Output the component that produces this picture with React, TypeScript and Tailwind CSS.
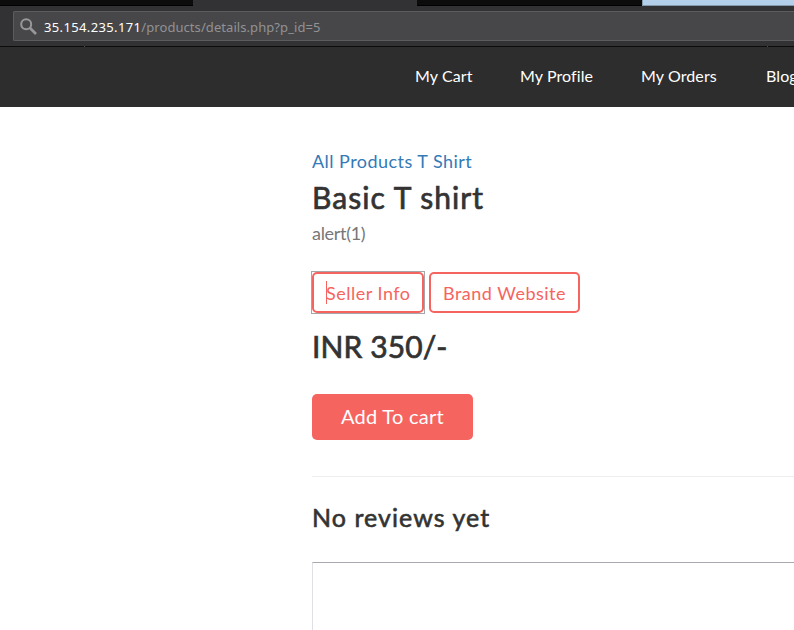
const navItems = [
  { label: 'My Cart', width: 'w-[57px]' },
  { label: 'My Profile', width: 'w-[73px]' },
  { label: 'My Orders', width: 'w-[77px]' },
  { label: 'Blog', width: 'w-[40px]' },
];

function BrowserChrome() {
  return (
    <div className="h-[47px] bg-[#323234]">
      <div className="flex h-[6px]">
        <div className="w-[193px] border-b border-black bg-[#0c0c0c]" />
        <div className="w-[224px]" />
        <div className="w-[225px] border-b border-black bg-[#0c0c0c]" />
        <div className="flex-1 border-b border-l border-[#8499ae] bg-[#b4cfea]" />
      </div>
      <div className="h-[40px] pt-[5px] pl-[13px]">
        <div className="flex h-[30px] items-center rounded-l-[2px] border border-r-0 border-[#5c5c5e] bg-[#474749] pl-[6px]">
          <svg className="h-[17px] w-[17px] shrink-0" viewBox="0 0 17 17" fill="none" stroke="#98989a">
            <circle cx="6.2" cy="6.2" r="5" strokeWidth="2" />
            <path d="M10 10l6 6" strokeWidth="2.6" />
          </svg>
          <div className="ml-[7px] pt-[2px] font-['Noto_Sans',sans-serif] text-[13px] leading-[18px] whitespace-nowrap text-[#929295]">
            <span className="tracking-[0.36px] text-white">35.154.235.171</span>
            <span className="tracking-[0.07px]">/products/details.php?p_id=5</span>
          </div>
        </div>
      </div>
      <div className="flex h-px bg-[#0c0c0d]">
        <div className="ml-[84px] w-px bg-[#4a4a4c]" />
        <div className="ml-[682px] w-px bg-[#4a4a4c]" />
      </div>
    </div>
  );
}

export default function App() {
  return (
    <div className="h-[630px] w-[794px] overflow-hidden bg-white font-['Lato',sans-serif] text-[#333333]">
      <BrowserChrome />
      <nav className="flex h-[60px] items-center gap-[48px] bg-[#2d2d2d] pb-[2px] pl-[415px] text-[16px] tracking-[0.1px] text-white">
        {navItems.map((item) => (
          <a key={item.label} className={`${item.width} shrink-0 whitespace-nowrap`}>
            {item.label}
          </a>
        ))}
      </nav>
      <main className="pt-[41px] pl-[312px]">
        <div className="h-[27px] text-[18px] leading-[26px] tracking-[0.46px] text-[#337ab7]">All Products T Shirt</div>
        <h1 className="h-[44px] text-[30px] leading-[44px] tracking-[1.05px] [-webkit-text-stroke:0.7px_#333333]">Basic T shirt</h1>
        <p className="h-[28px] text-[18px] leading-[28px] tracking-[-0.3px] text-[#777777]">alert(1)</p>
        <div className="mt-[24px] flex h-[43px] items-center gap-[4px] text-[18px] tracking-[0.5px] text-[#f66460]">
          <div className="-ml-px flex h-[43px] w-[114px] items-center border border-[#a5a5aa]">
            <a className="flex h-[41px] w-[112px] items-center rounded-[5px] border-2 border-[#f66460] pl-[12px]">
              <span className="-mr-px h-[23px] w-px bg-[#f66460]" />
              <span className="pt-[2px] whitespace-nowrap">Seller Info</span>
            </a>
          </div>
          <a className="flex h-[41px] w-[151px] items-center rounded-[5px] border-2 border-[#f66460] pl-[12px]">
            <span className="pt-[2px] whitespace-nowrap">Brand Website</span>
          </a>
        </div>
        <div className="mt-[12px] h-[40px] text-[30px] leading-[40px] tracking-[0.1px] [-webkit-text-stroke:0.7px_#333333]">INR 350/-</div>
        <button className="mt-[28px] flex h-[46px] w-[161px] items-center rounded-[5px] bg-[#f66460] pb-[3px] pl-[29px] text-[20px] tracking-[0.27px] whitespace-nowrap text-white">
          Add To cart
        </button>
        <div className="mt-[36px] h-px bg-[#eeeeee]" />
        <h2 className="mt-[22px] h-[38px] text-[25px] leading-[36px] tracking-[1.05px] [-webkit-text-stroke:0.6px_#333333]">No reviews yet</h2>
        <div className="mt-[25px] h-[80px] border-t border-l border-t-[#a9a9af] border-l-[#dfdfe6]" />
      </main>
    </div>
  );
}
